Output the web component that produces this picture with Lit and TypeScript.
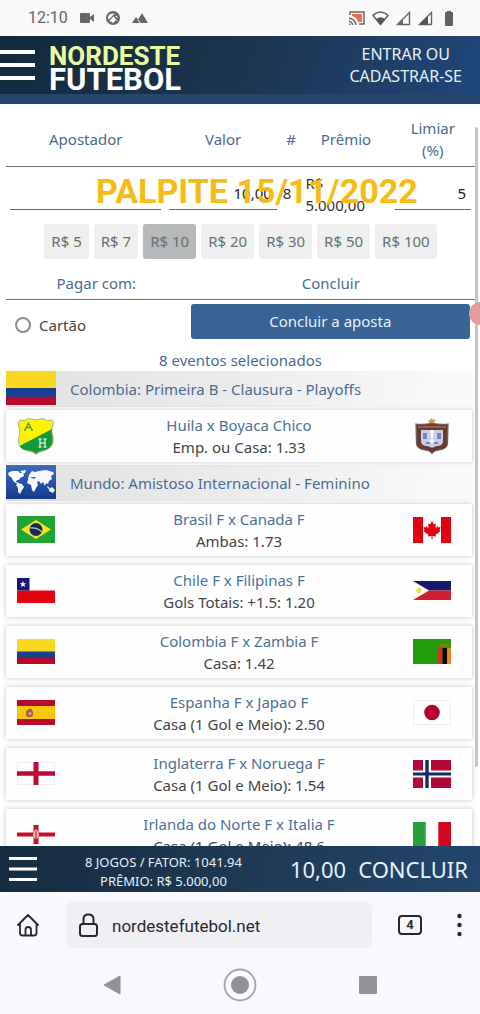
import { LitElement, html, css, svg, TemplateResult } from "lit";
import { customElement, property, state } from "lit/decorators.js";
import { classMap } from "lit/directives/class-map.js";

type Flag = { w: number; h: number; art: unknown };

const tricolor = svg`
  <rect width="38" height="25" fill="#f8d720"></rect>
  <rect y="12.5" width="38" height="12.5" fill="#1b3f8f"></rect>
  <rect y="19" width="38" height="6" fill="#b80a2d"></rect>`;

const flags: Record<string, Flag> = {
  colombia: { w: 38, h: 25, art: tricolor },
  huila: {
    w: 38,
    h: 38,
    art: svg`
      <path d="M3 3Q8 5 11 1.500Q19 4 26 1.500Q30 5 35 3Q38 6 35 11Q34 14 36 20Q38 31 26 34Q21 35 19 37.500Q17 35 11 34Q-1 31 2 20Q4 14 2 10Q0 6 3 3Z" fill="#fff100" stroke="#9db59b" stroke-width="1"></path>
      <path d="M35 12L2.500 29Q5 33 12 33.500Q17 34.500 19 37Q21 34.500 26 33.500Q37 31 35.500 20Q34 16 35 12Z" fill="#149a3b"></path>
      <path d="M8 13L11.500 6L15 13M9 10.500H14M7 13H9M14 13H16" fill="none" stroke="#4d9b35" stroke-width="1.400"></path>
      <path d="M23 22V30M28 22V30M23 26H28M21.500 22H24.500M26.500 22H29.500M21.500 30H24.500M26.500 30H29.500" fill="none" stroke="#cbe8c9" stroke-width="1.500"></path>`,
  },
  boyaca: {
    w: 38,
    h: 38,
    art: svg`
      <path d="M16 6Q15 2 17 3L19 1L20 3Q23 1 22 5L20 6Z" fill="#e79a4a"></path>
      <path d="M3 7Q12 8 19 6Q26 8 35 7L34.500 27Q34 32 26 33Q21 33.500 19 36.500Q17 33.500 12 33Q4 32 3.500 27Z" fill="#6b3b32" stroke="#65636e" stroke-width="1.200"></path>
      <path d="M5 10H33" stroke="#b36a3c" stroke-width="1.500"></path>
      <path d="M8 13H30V25Q29 29 24 29Q20 30 19 31Q18 30 14 29Q9 29 8 25Z" fill="#c9cfe6"></path>
      <path d="M10 16H14V22H10ZM24 16H28V22H24ZM13 25H17V27H13ZM21 25H25V27H21Z" fill="#7784b4"></path>
      <path d="M17 13H21L20 21H18Z" fill="#f7fbff"></path>
      <circle cx="19" cy="24" r="2.500" fill="#eef0fa"></circle>`,
  },
  brasil: {
    w: 38,
    h: 27,
    art: svg`
      <rect width="38" height="27" fill="#22a336"></rect>
      <path d="M4 13.500L19 4L34 13.500L19 23Z" fill="#f5e51b"></path>
      <circle cx="19" cy="13.500" r="6.500" fill="#16285f"></circle>
      <path d="M13 12Q20 11 25 16" fill="none" stroke="#b8ccd0" stroke-width="1.200"></path>`,
  },
  canada: {
    w: 38,
    h: 26,
    art: svg`
      <rect width="38" height="26" fill="#fff"></rect>
      <path d="M0 0H10V26H0ZM28 0H38V26H28Z" fill="#e3000f"></path>
      <path d="M19 4L21 7.500L23 6.500L22.300 11.500L24.500 9L25.200 10.500L27.500 10L26.600 13L27.500 14L22.500 18L23 19.500L19.500 19V22H18.500V19L15 19.500L15.500 18L10.500 14L11.400 13L10.500 10L12.800 10.500L13.500 9L15.700 11.500L15 6.500L17 7.500Z" fill="#e3000f"></path>`,
  },
  chile: {
    w: 38,
    h: 25,
    art: svg`
      <rect width="38" height="25" fill="#fff"></rect>
      <rect y="12.500" width="38" height="12.500" fill="#e3000f"></rect>
      <rect width="12.500" height="12.500" fill="#1c1672"></rect>
      <path d="M6 3L6.900 5.300H9.200L7.400 6.800L8.100 9L6 7.700L3.900 9L4.600 6.800L2.800 5.300H5.100Z" fill="#fff"></path>`,
  },
  filipinas: {
    w: 38,
    h: 19,
    art: svg`
      <rect width="38" height="9.500" fill="#17186f"></rect>
      <rect y="9.500" width="38" height="9.500" fill="#cf1f30"></rect>
      <path d="M0 0L16 9.500L0 19Z" fill="#fff"></path>
      <circle cx="6" cy="9.500" r="2.800" fill="#eee34c"></circle>
      <circle cx="1.500" cy="2.500" r="1" fill="#f1e77a"></circle>
      <circle cx="1.500" cy="16.500" r="1" fill="#f1e77a"></circle>`,
  },
  zambia: {
    w: 38,
    h: 25,
    art: svg`
      <rect width="38" height="25" fill="#229e0c"></rect>
      <rect x="25" y="9" width="4.500" height="16" fill="#d8321f"></rect>
      <rect x="29.500" y="9" width="4.500" height="16" fill="#0b0b06"></rect>
      <rect x="34" y="9" width="4" height="16" fill="#e78a1d"></rect>
      <path d="M26 4L30 5.500L31.500 4.500L33 5.500L37 4L34.500 7.500H28.500Z" fill="#b36d12"></path>`,
  },
  espanha: {
    w: 38,
    h: 25,
    art: svg`
      <rect width="38" height="25" fill="#b60b2b"></rect>
      <rect y="6" width="38" height="13" fill="#f8c60b"></rect>
      <rect x="9" y="10" width="7" height="7" rx="2" fill="#a8623f"></rect>
      <path d="M11 9H15L14 10.500H12Z" fill="#9b5634"></path>
      <circle cx="13" cy="13.500" r="1.500" fill="#d8a59a"></circle>`,
  },
  japao: {
    w: 38,
    h: 25,
    art: svg`
      <rect x=".5" y=".5" width="37" height="24" fill="#fff" stroke="#efeff2"></rect>
      <circle cx="19" cy="12.500" r="7.800" fill="#b2002f"></circle>`,
  },
  inglaterra: {
    w: 38,
    h: 23,
    art: svg`
      <rect x=".5" y=".5" width="37" height="22" fill="#fff" stroke="#ececef"></rect>
      <path d="M16.500 0H21.500V23H16.500ZM0 9.300H38V13.700H0Z" fill="#c00a33"></path>`,
  },
  noruega: {
    w: 38,
    h: 28,
    art: svg`
      <rect width="38" height="28" fill="#b0093a"></rect>
      <path d="M10 0H18V28H10ZM0 10.500H38V17.500H0Z" fill="#fff"></path>
      <path d="M12.300 0H15.700V28H12.300ZM0 12.600H38V15.400H0Z" fill="#142b62"></path>`,
  },
  irlanda: {
    w: 38,
    h: 19,
    art: svg`
      <rect width="38" height="19" fill="#fff"></rect>
      <path d="M16.500 0H21.500V19H16.500ZM0 7.500H38V11.500H0Z" fill="#c8102a"></path>
      <path d="M19 4L21 6.500L22 10L20.500 13.500H17.500L16 10L17 6.500Z" fill="#eccfca"></path>
      <path d="M18 6H20V13H18Z" fill="#c96559"></path>`,
  },
  italia: {
    w: 38,
    h: 25,
    art: svg`
      <rect width="38" height="25" fill="#fff"></rect>
      <rect width="12.700" height="25" fill="#22a13e"></rect>
      <rect x="25.300" width="12.700" height="25" fill="#d3061f"></rect>`,
  },
  mundo: {
    w: 50,
    h: 34,
    art: svg`
      <defs>
        <linearGradient id="sea" x1="0" y1="0" x2="0" y2="1">
          <stop offset="0" stop-color="#3f6cba"></stop>
          <stop offset=".55" stop-color="#2350a8"></stop>
          <stop offset="1" stop-color="#173a85"></stop>
        </linearGradient>
      </defs>
      <rect width="50" height="34" fill="url(#sea)"></rect>
      <g fill="#f7faff">
        <path d="M2 8L6 6L12 6L14 8L17 8L18 11L14 13L13 15L11 15L10 17L13 18L12 19L8 17L5 12L3 11Z"></path>
        <path d="M14 6L20 5L19 8L17 9Z"></path>
        <path d="M12 18L16 19L18 22L16 25L14 29L12 27L12 23L10 20Z"></path>
        <path d="M22 14L23 10L26 6L29 7L33 6L40 5L47 7L48 9L45 11L46 14L43 16L42 19L40 18L39 21L37 17L35 19L33 16L31 17L32 20L30 23L28 27L26 25L25 20L21 18L22 15Z"></path>
        <path d="M41 21L44 23L42 24ZM43 24L46 22L49 25L47 28L43 26Z"></path>
      </g>
      <path d="M24 12L30 12L28 14Z" fill="#3763ad"></path>`,
  },
};

const flag = (name: string, w?: number, h?: number): TemplateResult => {
  const f = flags[name];
  return html`<svg width=${w ?? f.w} height=${h ?? f.h} viewBox="0 0 ${f.w} ${f.h}" preserveAspectRatio="none" aria-hidden="true">${f.art}</svg>`;
};

const menuIcon = (w: number, h: number, bar: number) => html`
  <svg width=${w} height=${h} viewBox="0 0 ${w} ${h}" aria-hidden="true">
    <g fill="#fff">
      <rect width=${w} height=${bar}></rect>
      <rect y=${(h - bar) / 2} width=${w} height=${bar}></rect>
      <rect y=${h - bar} width=${w} height=${bar}></rect>
    </g>
  </svg>`;

@customElement("status-bar")
class StatusBar extends LitElement {
  static styles = css`
    :host {
      display: flex;
      align-items: center;
      justify-content: space-between;
      height: 36px;
      padding: 0 24px 0 28px;
      background: #f9f9f9;
      color: #666;
      font: 16px/36px Roboto, sans-serif;
    }
    .side {
      display: flex;
      align-items: center;
    }
    .left {
      gap: 12px;
    }
    .right {
      gap: 7px;
    }
    svg {
      display: block;
    }
  `;

  render() {
    return html`
      <div class="side left">
        <time>12:10</time>
        <svg width="14" height="12" viewBox="0 0 14 12"><path d="M1 1H9Q10 1 10 2V5L14 2V10L10 7V10Q10 11 9 11H1Q0 11 0 10V2Q0 1 1 1Z" fill="#666"></path></svg>
        <svg width="14" height="16" viewBox="0 0 16 16"><circle cx="8" cy="8" r="8" fill="#666"></circle><path d="M2.500 10Q1.500 5 5 3.500Q8 2 10 3.500Q7 5 6 7Z" fill="#f9f9f9"></path><path d="M3.500 12L8.500 6L13.500 12L11 10.500L8 14L6 12Z" fill="#f9f9f9"></path><path d="M12 5L14 8.500L10.500 6.500Z" fill="#f9f9f9"></path></svg>
        <svg width="16" height="12" viewBox="0 0 16 12"><path d="M0 11L4 5L6 7.500L10 1L16 11Z" fill="#666"></path><path d="M6 8L8 11" stroke="#f9f9f9"></path></svg>
      </div>
      <div class="side right">
        <svg width="16" height="14" viewBox="0 0 16 14"><path d="M1 4V1H15V13H10" fill="none" stroke="#6c6565" stroke-width="1.500"></path><path d="M3 3H13V11H9Q8 6 3 5Z" fill="#f26a4e"></path><path d="M0 7Q6 8 7 14M0 10Q3 11 4 14" fill="none" stroke="#666" stroke-width="1.400"></path><path d="M0 12L2 14H0Z" fill="#666"></path></svg>
        <svg width="17" height="15" viewBox="0 0 17 15"><path d="M1 4.500Q8.500-2.500 16 4.500L8.500 13.500Z" fill="none" stroke="#666" stroke-width="1.500"></path><path d="M4 8Q8.500 4.500 13 8L8.500 14Z" fill="#555"></path></svg>
        <svg width="15" height="15" viewBox="0 0 15 15"><path d="M1.500 13.500L13.500 1.500V13.500Z" fill="none" stroke="#666" stroke-width="1.400"></path><path d="M1 14L7 8V14Z" fill="#666"></path></svg>
        <svg width="15" height="15" viewBox="0 0 15 15"><path d="M1.500 13.500L13.500 1.500V13.500Z" fill="none" stroke="#666" stroke-width="1.400"></path><path d="M1 14L10 5V14Z" fill="#555"></path></svg>
        <svg width="16" height="16" viewBox="0 0 16 16"><path d="M7 2V1H11V2H12Q13 2 13 3V15Q13 16 12 16H6Q5 16 5 15V3Q5 2 6 2Z" fill="#626262"></path></svg>
      </div>
    `;
  }
}

@customElement("site-header")
class SiteHeader extends LitElement {
  static styles = css`
    :host {
      display: flex;
      align-items: center;
      box-sizing: border-box;
      height: 68px;
      padding: 0 18px 10px 0;
      background:
        linear-gradient(#25456a, #25456a) bottom / 100% 10px no-repeat,
        linear-gradient(110deg, #112a3e, #1b3550 50%, #20477a);
      color: #e6f1fa;
    }
    button {
      display: flex;
      padding: 0;
      border: 0;
      background: none;
    }
    .brand {
      display: flex;
      flex: 1;
      flex-direction: column;
      margin-left: 14px;
      padding-top: 5px;
      font-family: Roboto, sans-serif;
      font-weight: 700;
      text-decoration: none;
    }
    .top {
      color: #ecfa9c;
      font-size: 26px;
      line-height: 24px;
    }
    .bottom {
      color: #fff;
      font-size: 31px;
      line-height: 24px;
    }
    .login {
      color: inherit;
      font: 16px/22px "Noto Sans", sans-serif;
      text-align: center;
      text-decoration: none;
    }
  `;

  render() {
    return html`
      <button aria-label="Menu">${menuIcon(35, 30, 4)}</button>
      <a class="brand" href="#"><span class="top">NORDESTE</span><span class="bottom">FUTEBOL</span></a>
      <a class="login" href="#entrar">ENTRAR OU<br />CADASTRAR-SE</a>
    `;
  }
}

@customElement("bet-form")
class BetForm extends LitElement {
  static styles = css`
    :host {
      display: block;
    }
    table {
      width: 100%;
      border-collapse: collapse;
      table-layout: fixed;
    }
    th {
      box-sizing: border-box;
      padding: 0;
      border-bottom: 1px solid #6c727c;
      color: #4c6a8f;
      font-weight: 400;
    }
    td {
      padding: 0;
      vertical-align: top;
    }
    .fields th {
      height: 62px;
      padding-top: 8px;
    }
    .name {
      width: 34%;
    }
    .value {
      width: 24.6%;
    }
    .count {
      width: 4.400%;
    }
    .prize {
      width: 19%;
    }
    .field {
      display: block;
      box-sizing: border-box;
      width: calc(100% - 8px);
      height: 36px;
      margin: 7px 4px 0;
      padding: 3px 5px 0;
      border: 0;
      border-bottom: 1px solid #666;
      border-radius: 0;
      outline: 0;
      background: none;
      color: #222;
      font: inherit;
      text-align: right;
    }
    .fields .games {
      padding: 15px 0 0 2px;
    }
    .fields .total {
      padding: 5px 0 0 4px;
    }
    .chips {
      display: flex;
      justify-content: center;
      gap: 5px;
      padding: 8px 0 13px;
    }
    .chip {
      height: 35px;
      padding: 0 7px;
      border: 0;
      border-radius: 3px;
      background: #efeff0;
      color: #66706f;
      font: inherit;
    }
    .chip.on {
      background: #b7b8b9;
    }
    .pay th {
      height: 27px;
      padding-bottom: 5px;
    }
    .method {
      width: 38.5%;
    }
    .choice {
      display: flex;
      align-items: center;
      gap: 8px;
      margin-top: 14px;
      padding-left: 9px;
      color: #444;
    }
    .radio {
      appearance: none;
      box-sizing: border-box;
      width: 16px;
      height: 16px;
      margin: 0;
      border: 2px solid #8b8b8b;
      border-radius: 50%;
    }
    .submit {
      display: block;
      width: calc(100% - 9px);
      height: 35px;
      margin: 4px 5px 0 4px;
      border: 0;
      border-radius: 3px;
      background: #376495;
      color: #e4f2ff;
      font: inherit;
    }
  `;

  @state() private amount = 10;

  render() {
    return html`
      <table class="fields">
        <thead>
          <tr>
            <th class="name" id="h-name">Apostador</th>
            <th class="value" id="h-value">Valor</th>
            <th class="count">#</th>
            <th class="prize">Prêmio</th>
            <th id="h-limit">Limiar<br />(%)</th>
          </tr>
        </thead>
        <tbody>
          <tr>
            <td><input class="field" aria-labelledby="h-name" /></td>
            <td><input class="field" aria-labelledby="h-value" .value=${`${this.amount},00`} /></td>
            <td class="games">8</td>
            <td class="total">R$<br />5.000,00</td>
            <td><input class="field" aria-labelledby="h-limit" value="5" /></td>
          </tr>
        </tbody>
      </table>
      <div class="chips">
        ${[5, 7, 10, 20, 30, 50, 100].map(
          (v) => html`<button class=${classMap({ chip: true, on: v === this.amount })} @click=${() => (this.amount = v)}>R$ ${v}</button>`
        )}
      </div>
      <table class="pay">
        <thead>
          <tr>
            <th class="method">Pagar com:</th>
            <th>Concluir</th>
          </tr>
        </thead>
        <tbody>
          <tr>
            <td><label class="choice"><input class="radio" type="radio" name="pay" />Cartão</label></td>
            <td><button class="submit">Concluir a aposta</button></td>
          </tr>
        </tbody>
      </table>
    `;
  }
}

@customElement("league-title")
class LeagueTitle extends LitElement {
  static styles = css`
    :host {
      display: flex;
      gap: 14px;
      height: 36px;
      background: linear-gradient(100deg, #e0e1e2, #ececee 50%, #fafafc 95%);
      color: #4c6a8f;
      line-height: 36px;
    }
    svg {
      display: block;
    }
  `;

  @property() flag = "";
  @property() name = "";

  render() {
    return html`${flag(this.flag, 50, 34)}<span>${this.name}</span>`;
  }
}

@customElement("match-card")
class MatchCard extends LitElement {
  static styles = css`
    :host {
      display: grid;
      grid-template-columns: 80px 1fr 80px;
      align-items: center;
      height: 52px;
      background: #fefefe;
      box-shadow: 0 0 5px rgb(0 0 0 / 24%);
      color: #444;
      text-align: center;
    }
    .crest {
      display: flex;
      justify-content: center;
    }
    .home {
      justify-content: flex-start;
      padding-left: 11px;
    }
    .teams {
      color: #4c7297;
      text-decoration: none;
    }
    .info {
      display: flex;
      flex-direction: column;
      white-space: nowrap;
    }
  `;

  @property() home = "";
  @property() away = "";
  @property() teams = "";
  @property() pick = "";

  render() {
    return html`
      <span class="crest home">${flag(this.home)}</span>
      <div class="info"><a class="teams" href="#jogo">${this.teams}</a><span>${this.pick}</span></div>
      <span class="crest">${flag(this.away)}</span>
    `;
  }
}

@customElement("bet-footer")
class BetFooter extends LitElement {
  static styles = css`
    :host {
      display: flex;
      align-items: center;
      height: 46px;
      padding: 0 12px 0 9px;
      background: linear-gradient(100deg, #152c40, #1d3954 50%, #21466c);
      color: #e6f1fa;
    }
    button {
      display: flex;
      padding: 0;
      border: 0;
      background: none;
      color: inherit;
      font: inherit;
    }
    .summary {
      flex: 1;
      padding-top: 5px;
      font-size: 13px;
      line-height: 19px;
      text-align: center;
    }
    .action {
      display: flex;
      gap: 12px;
      font-size: 22px;
      line-height: 30px;
    }
  `;

  render() {
    return html`
      <button aria-label="Menu">${menuIcon(28, 24, 3)}</button>
      <div class="summary">8 JOGOS / FATOR: 1041.94<br />PRÊMIO: R$ 5.000,00</div>
      <div class="action"><span>10,00</span><button>CONCLUIR</button></div>
    `;
  }
}

@customElement("browser-bar")
class BrowserBar extends LitElement {
  static styles = css`
    :host {
      display: block;
      background: #f9f8fd;
      color: #29272e;
      font-family: Roboto, sans-serif;
    }
    .tools {
      display: flex;
      align-items: center;
      height: 46px;
      padding: 10px 16px 8px;
    }
    button {
      display: flex;
      padding: 0;
      border: 0;
      background: none;
    }
    .address {
      display: flex;
      flex: 1;
      align-items: center;
      gap: 13px;
      height: 46px;
      margin: 0 26px;
      padding-left: 12px;
      border-radius: 6px;
      background: #f0eff3;
    }
    .url {
      flex: 1;
      min-width: 0;
      padding: 2px 0 0;
      border: 0;
      outline: 0;
      background: none;
      color: inherit;
      font: 17px/24px Roboto, sans-serif;
    }
    .tabs {
      box-sizing: border-box;
      justify-content: center;
      width: 24px;
      height: 20px;
      margin-right: 33px;
      border: 2px solid #29272e;
      border-radius: 4px;
      color: inherit;
      font: 700 13px/16px Roboto, sans-serif;
    }
    .nav {
      display: flex;
      align-items: center;
      justify-content: center;
      gap: 94px;
      height: 58px;
    }
    .nav button {
      justify-content: center;
      width: 34px;
    }
  `;

  render() {
    return html`
      <div class="tools">
        <button aria-label="Início">
          <svg width="24" height="24" viewBox="0 0 24 24" fill="none" stroke="#29272e" stroke-width="1.800" stroke-linecap="round" stroke-linejoin="round"><path d="M2 12L12 2L22 12M4 10.500V20Q4 22.500 6.500 22.500H18Q20.500 22.500 20.500 20V10.500M9.500 22V17Q9.500 14 12.200 14Q15 14 15 17V22"></path></svg>
        </button>
        <label class="address">
          <svg width="21" height="24" viewBox="0 0 21 24" fill="none" stroke="#29272e" stroke-width="2"><rect x="2" y="11" width="17" height="12" rx="2.500"></rect><path d="M5.500 11V6Q5.500 1.500 10.500 1.500Q15.500 1.500 15.500 6V11"></path></svg>
          <input class="url" aria-label="Endereço" value="nordestefutebol.net" />
        </label>
        <button class="tabs" aria-label="Abas">4</button>
        <button aria-label="Mais"><svg width="9" height="24" viewBox="0 0 9 24" fill="#29272e"><circle cx="4.500" cy="3" r="2.200"></circle><circle cx="4.500" cy="12" r="2.200"></circle><circle cx="4.500" cy="21" r="2.200"></circle></svg></button>
      </div>
      <div class="nav">
        <button aria-label="Voltar"><svg width="18" height="20" viewBox="0 0 18 20"><path d="M1 10L17 1V19Z" fill="#929196" stroke="#929196" stroke-linejoin="round"></path></svg></button>
        <button aria-label="Tela inicial"><svg width="34" height="34" viewBox="0 0 34 34"><circle cx="17" cy="17" r="15.500" fill="none" stroke="#a3a2a7" stroke-width="1.800"></circle><circle cx="17" cy="17" r="9" fill="#929196"></circle></svg></button>
        <button aria-label="Recentes"><svg width="18" height="18" viewBox="0 0 18 18"><rect width="18" height="18" rx="1" fill="#929196"></rect></svg></button>
      </div>
    `;
  }
}

const leagues = [
  {
    flag: "colombia",
    name: "Colombia: Primeira B - Clausura - Playoffs",
    matches: [["huila", "boyaca", "Huila x Boyaca Chico", "Emp. ou Casa: 1.33"]],
  },
  {
    flag: "mundo",
    name: "Mundo: Amistoso Internacional - Feminino",
    matches: [
      ["brasil", "canada", "Brasil F x Canada F", "Ambas: 1.73"],
      ["chile", "filipinas", "Chile F x Filipinas F", "Gols Totais: +1.5: 1.20"],
      ["colombia", "zambia", "Colombia F x Zambia F", "Casa: 1.42"],
      ["espanha", "japao", "Espanha F x Japao F", "Casa (1 Gol e Meio): 2.50"],
      ["inglaterra", "noruega", "Inglaterra F x Noruega F", "Casa (1 Gol e Meio): 1.54"],
      ["irlanda", "italia", "Irlanda do Norte F x Italia F", "Casa (1 Gol e Meio): 48.6"],
    ],
  },
];

@customElement("app-root")
class AppRoot extends LitElement {
  static styles = css`
    :host {
      position: relative;
      display: flex;
      flex-direction: column;
      height: 100vh;
      overflow: hidden;
      background: #fff;
      color: #333;
      font: 15px/22px "Noto Sans", sans-serif;
    }
    status-bar,
    site-header,
    bet-footer,
    browser-bar {
      flex: none;
    }
    .page {
      position: relative;
      flex: 1;
      min-height: 0;
      overflow: hidden;
      padding: 0 5px 0 6px;
    }
    .count {
      margin: 0;
      padding-top: 10px;
      color: #4c6a8f;
      text-align: center;
    }
    .list {
      display: flex;
      flex-direction: column;
      gap: 9px;
      padding: 3px 3px 3px 0;
    }
    .caption {
      position: absolute;
      top: 67px;
      left: 96px;
      margin: 0;
      color: #f5bb16;
      font: 700 34px/40px Roboto, sans-serif;
      white-space: nowrap;
    }
    .scroll {
      position: absolute;
      top: 23px;
      right: 2px;
      width: 3px;
      height: 640px;
      border-radius: 2px;
      background: #c4c4c9;
    }
    .touch {
      position: absolute;
      top: 198px;
      right: -12px;
      width: 23px;
      height: 23px;
      border-radius: 50%;
      background: #e59a9c;
    }
  `;

  render() {
    return html`
      <status-bar></status-bar>
      <site-header></site-header>
      <main class="page">
        <bet-form></bet-form>
        <p class="count">8 eventos selecionados</p>
        ${leagues.map(
          (l) => html`
            <league-title flag=${l.flag} name=${l.name}></league-title>
            <div class="list">
              ${l.matches.map(
                ([home, away, teams, pick]) =>
                  html`<match-card home=${home} away=${away} teams=${teams} pick=${pick}></match-card>`
              )}
            </div>
          `
        )}
        <p class="caption">PALPITE 15/11/2022</p>
        <span class="scroll"></span>
        <span class="touch"></span>
      </main>
      <bet-footer></bet-footer>
      <browser-bar></browser-bar>
    `;
  }
}
